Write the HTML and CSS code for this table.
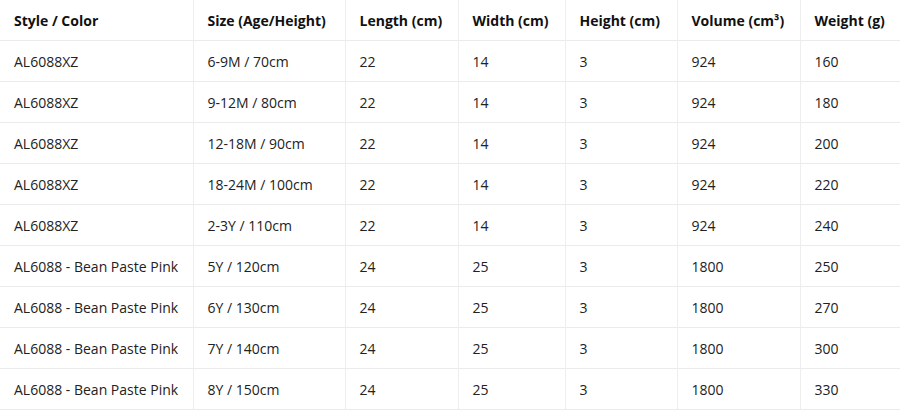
FILE: index.html
```html
<!DOCTYPE html>
<html lang="en">
<head>
<meta charset="utf-8">
<title>Size Chart</title>
<link rel="stylesheet" href="styles.css">
</head>
<body>
<table class="chart">
  <colgroup>
    <col class="c1"><col class="c2"><col class="c3"><col class="c4"><col class="c5"><col class="c6"><col class="c7">
  </colgroup>
  <thead>
    <tr><th>Style / Color</th><th>Size (Age/Height)</th><th>Length (cm)</th><th>Width (cm)</th><th>Height (cm)</th><th>Volume (cm³)</th><th>Weight (g)</th></tr>
  </thead>
  <tbody>
    <tr><td>AL6088XZ</td><td>6-9M / 70cm</td><td>22</td><td>14</td><td>3</td><td>924</td><td>160</td></tr>
    <tr><td>AL6088XZ</td><td>9-12M / 80cm</td><td>22</td><td>14</td><td>3</td><td>924</td><td>180</td></tr>
    <tr><td>AL6088XZ</td><td>12-18M / 90cm</td><td>22</td><td>14</td><td>3</td><td>924</td><td>200</td></tr>
    <tr><td>AL6088XZ</td><td>18-24M / 100cm</td><td>22</td><td>14</td><td>3</td><td>924</td><td>220</td></tr>
    <tr><td>AL6088XZ</td><td>2-3Y / 110cm</td><td>22</td><td>14</td><td>3</td><td>924</td><td>240</td></tr>
    <tr><td>AL6088 - Bean Paste Pink</td><td>5Y / 120cm</td><td>24</td><td>25</td><td>3</td><td>1800</td><td>250</td></tr>
    <tr><td>AL6088 - Bean Paste Pink</td><td>6Y / 130cm</td><td>24</td><td>25</td><td>3</td><td>1800</td><td>270</td></tr>
    <tr><td>AL6088 - Bean Paste Pink</td><td>7Y / 140cm</td><td>24</td><td>25</td><td>3</td><td>1800</td><td>300</td></tr>
    <tr><td>AL6088 - Bean Paste Pink</td><td>8Y / 150cm</td><td>24</td><td>25</td><td>3</td><td>1800</td><td>330</td></tr>
  </tbody>
</table>
</body>
</html>
```
FILE: styles.css
```css
html, body {
  margin: 0;
  padding: 0;
  background: #ffffff;
}
body {
  font-family: "Open Sans", "Noto Sans", "Liberation Sans", sans-serif;
  font-size: 14px;
  color: #222222;
}
.chart {
  width: 900px;
  border-collapse: collapse;
  table-layout: fixed;
}
.c1 { width: 193px; }
.c2 { width: 152px; }
.c3 { width: 113px; }
.c4 { width: 107px; }
.c5 { width: 112px; }
.c6 { width: 123px; }
.c7 { width: 100px; }
.chart th,
.chart td {
  text-align: left;
  padding: 0 14px;
  border-right: 1px solid #eeeeee;
  border-bottom: 1px solid #ebebeb;
  white-space: nowrap;
  vertical-align: middle;
}
.chart th:last-child,
.chart td:last-child {
  border-right: none;
}
.chart th {
  height: 40px;
  font-weight: 700;
  color: #111111;
}
.chart td {
  height: 40px;
}
```
